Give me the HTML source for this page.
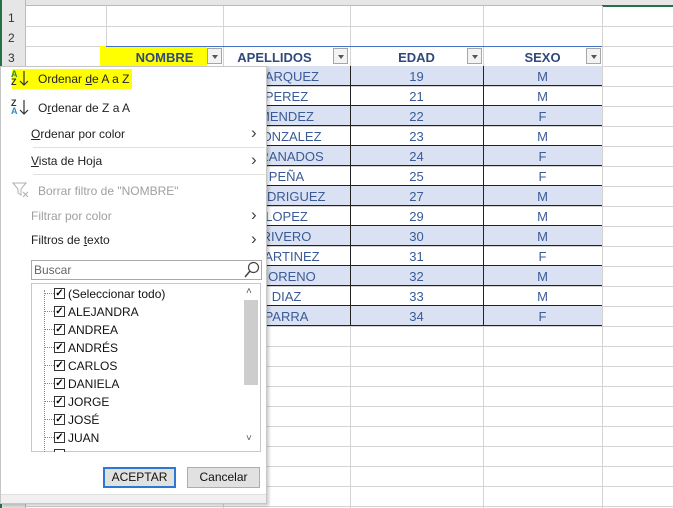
<!DOCTYPE html>
<html><head><meta charset="utf-8"><style>
*{margin:0;padding:0;box-sizing:border-box}
body{width:673px;height:508px;overflow:hidden;background:#fff;position:relative;font-family:"Liberation Sans",sans-serif}
.a{position:absolute}
.hl{position:absolute;background:#d4d4d4}
.vl{position:absolute;background:#d4d4d4;width:1px}
.rn{position:absolute;left:0;width:26px;font-size:12px;color:#333;padding-left:8px}
.cell{position:absolute;height:20px;line-height:22px;text-align:center;font-size:13px;color:#3a5a98}
.dd{position:absolute;width:15px;height:16px;border:1px solid #a6a6a6;background:#f3f3f3}
.dd:after{content:"";position:absolute;left:4px;top:6px;border-left:3px solid transparent;border-right:3px solid transparent;border-top:4px solid #555}
.mi{position:absolute;left:31px;font-size:12px;color:#222;font-family:"Liberation Sans",sans-serif}
.dis{color:#a0a0a0}
.arr{position:absolute;left:251px;font-size:17px;line-height:17px;color:#444}
.li{position:absolute;left:68px;font-size:12px;color:#111}
.cb{position:absolute;left:54px;width:11px;height:11px;border:1px solid #333;background:#fff;font-size:10px;line-height:9px;text-align:center;font-weight:bold}
</style></head><body>
<div class="a" style="left:0;top:0;width:673px;height:6px;background:#e6e6e6;border-bottom:1px solid #bbb"></div>
<div class="a" style="left:602px;top:5px;width:71px;height:2px;background:#217346"></div>
<div class="a" style="left:0;top:0;width:26px;height:508px;background:#e6e6e6;border-right:1px solid #bbb"></div>
<div class="a" style="left:0;top:0;width:2px;height:508px;background:#217346"></div>
<div class="hl" style="left:26px;top:26px;width:647px;height:1px"></div>
<div class="hl" style="left:26px;top:46px;width:647px;height:1px"></div>
<div class="hl" style="left:26px;top:66px;width:647px;height:1px"></div>
<div id="g"></div>
<div class="vl" style="left:106px;top:6px;height:40px"></div>
<div class="vl" style="left:223px;top:6px;height:502px"></div>
<div class="vl" style="left:350px;top:6px;height:502px"></div>
<div class="vl" style="left:483px;top:6px;height:502px"></div>
<div class="vl" style="left:602px;top:6px;height:502px"></div>
<div class="rn" style="top:11px">1</div>
<div class="rn" style="top:31px">2</div>
<div class="rn" style="top:51px">3</div>
<script>
var s='';
for(var y=86;y<508;y+=20){s+='<div class="hl" style="left:26px;top:'+y+'px;width:647px;height:1px"></div>';}
document.getElementById('g').innerHTML=s;
</script>
<div class="a" style="left:100px;top:46px;width:107px;height:20px;background:#ffff00"></div>
<div class="a" style="left:106px;top:46px;width:496px;height:1px;background:#4472c4"></div>
<div class="cell" style="left:106px;top:47px;width:117px;font-weight:bold;color:#2f4a7a">NOMBRE</div>
<div class="cell" style="left:223px;top:47px;width:127px;font-weight:bold;color:#2f4a7a;padding-right:24px">APELLIDOS</div>
<div class="cell" style="left:350px;top:47px;width:133px;font-weight:bold;color:#2f4a7a">EDAD</div>
<div class="cell" style="left:483px;top:47px;width:119px;font-weight:bold;color:#2f4a7a">SEXO</div>
<div class="dd" style="left:207px;top:48px"></div>
<div class="dd" style="left:333px;top:48px"></div>
<div class="dd" style="left:467px;top:48px"></div>
<div class="dd" style="left:586px;top:48px"></div>
<div id="t"></div>
<script>
var d=[["MARQUEZ",19,"M"],["PEREZ",21,"M"],["MENDEZ",22,"F"],["GONZALEZ",23,"M"],["GRANADOS",24,"F"],["PEÑA",25,"F"],["RODRIGUEZ",27,"M"],["LOPEZ",29,"M"],["RIVERO",30,"M"],["MARTINEZ",31,"F"],["MORENO",32,"M"],["DIAZ",33,"M"],["PARRA",34,"F"]];
var h='';
for(var i=0;i<d.length;i++){var y=66+i*20;
if(i%2==0)h+='<div class="a" style="left:106px;top:'+y+'px;width:496px;height:20px;background:#d9e1f2"></div>';
h+='<div class="a" style="left:106px;top:'+(y+19)+'px;width:496px;height:1px;background:#222"></div>';
h+='<div class="cell" style="left:223px;top:'+y+'px;width:127px">'+d[i][0]+'</div>';
h+='<div class="cell" style="left:350px;top:'+y+'px;width:133px">'+d[i][1]+'</div>';
h+='<div class="cell" style="left:483px;top:'+y+'px;width:119px">'+d[i][2]+'</div>';}
h+='<div class="a" style="left:223px;top:66px;width:1px;height:260px;background:#222"></div>';
h+='<div class="a" style="left:350px;top:66px;width:1px;height:260px;background:#222"></div>';
h+='<div class="a" style="left:483px;top:66px;width:1px;height:260px;background:#222"></div>';
document.getElementById('t').innerHTML=h;
</script>
<div class="a" style="left:0;top:66px;width:267px;height:438px;background:#fff;border:1px solid #c6c6c6;box-shadow:2px 2px 3px rgba(0,0,0,.2)"></div>
<div class="a" style="left:12px;top:69px;width:120px;height:20px;background:#ffff00"></div>
<div class="a" style="left:11px;top:70px;font-size:9px;line-height:8px;color:#1e8c3c;font-weight:bold">A<br><span style="color:#333">Z</span></div>
<svg class="a" style="left:19px;top:70px" width="10" height="17"><path d="M5 1v14M1 11l4 4 4-4" fill="none" stroke="#333" stroke-width="1.2"/></svg>
<div class="a" style="left:11px;top:99px;font-size:9px;line-height:8px;color:#333;font-weight:bold">Z<br><span style="color:#2e8bc0">A</span></div>
<svg class="a" style="left:19px;top:99px" width="10" height="17"><path d="M5 1v14M1 11l4 4 4-4" fill="none" stroke="#333" stroke-width="1.2"/></svg>
<div class="mi" style="left:38px;top:72px">Ordenar <u>d</u>e A a Z</div>
<div class="mi" style="left:38px;top:101px">O<u>r</u>denar de Z a A</div>
<div class="mi" style="top:127px"><u>O</u>rdenar por color</div>
<div class="arr" style="top:124px">›</div>
<div class="a" style="left:33px;top:147px;width:232px;height:1px;background:#e0e0e0"></div>
<div class="mi" style="top:154px"><u>V</u>ista de Hoja</div>
<div class="arr" style="top:151px">›</div>
<div class="a" style="left:33px;top:174px;width:232px;height:1px;background:#e0e0e0"></div>
<svg class="a" style="left:12px;top:182px" width="18" height="16"><path d="M1 1h13l-5 6v6l-3-2v-4z" fill="none" stroke="#b0b0b0"/><path d="M11 10l5 5M16 10l-5 5" stroke="#b0b0b0"/></svg>
<div class="mi dis" style="left:38px;top:184px">Borrar filtro de "NOMBRE"</div>
<div class="mi dis" style="top:209px">Filtrar por color</div>
<div class="arr dis" style="top:206px">›</div>
<div class="mi" style="top:233px">Filtros de <u>t</u>exto</div>
<div class="arr" style="top:230px">›</div>
<div class="a" style="left:31px;top:260px;width:231px;height:20px;border:1px solid #aaa"></div>
<div class="a" style="left:34px;top:263px;font-size:12px;color:#666">Buscar</div>
<svg class="a" style="left:244px;top:261px" width="16" height="17"><circle cx="9.5" cy="6.5" r="5" fill="none" stroke="#444" stroke-width="1.2"/><path d="M6 10L1 16" stroke="#444" stroke-width="1.5"/></svg>
<div class="a" style="left:31px;top:283px;width:230px;height:169px;border:1px solid #c8c8c8"></div>
<div class="a" style="left:244px;top:300px;width:14px;height:85px;background:#cdcdcd"></div>
<div class="a" style="left:246px;top:286px;font-size:10px;color:#555">˄</div>
<div class="a" style="left:246px;top:433px;font-size:10px;color:#555">˅</div>
<div class="a" style="left:44px;top:290px;width:0;height:162px;border-left:1px dotted #888"></div>
<div id="l"></div>
<script>
var n=["(Seleccionar todo)","ALEJANDRA","ANDREA","ANDRÉS","CARLOS","DANIELA","JORGE","JOSÉ","JUAN"];
var h='';
for(var i=0;i<n.length;i++){var y=287+i*18;
h+='<div class="a" style="left:45px;top:'+(y+6)+'px;width:9px;border-top:1px dotted #888"></div>';
h+='<div class="cb" style="top:'+(y+1)+'px">✓</div>';
h+='<div class="li" style="top:'+y+'px">'+n[i]+'</div>';}
h+='<div class="cb" style="top:449px;height:3px;border-bottom:none"></div>';
document.getElementById('l').innerHTML=h;
</script>
<div class="a" style="left:103px;top:467px;width:73px;height:21px;border:2px solid #2b79d0;background:#e1e1e1;font-size:12px;text-align:center;line-height:17px;color:#111">ACEPTAR</div>
<div class="a" style="left:187px;top:467px;width:73px;height:21px;border:1px solid #adadad;background:#e1e1e1;font-size:12px;text-align:center;line-height:19px;color:#111">Cancelar</div>
<div class="a" style="left:1px;top:494px;width:265px;height:9px;background:#f0f0f0;border-top:1px solid #e0e0e0"></div>
</body></html>
